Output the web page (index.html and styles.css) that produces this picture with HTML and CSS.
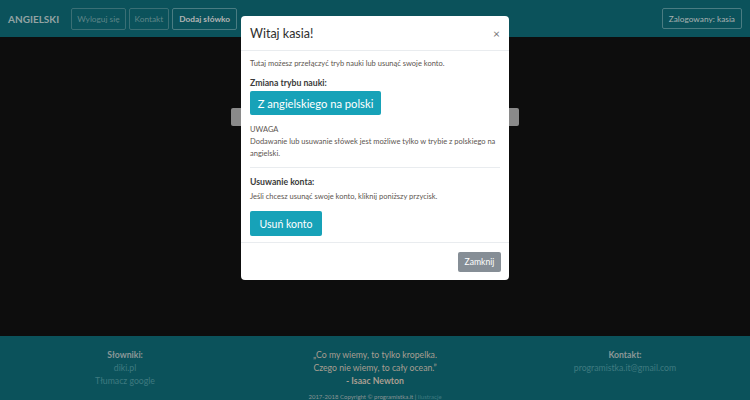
FILE: index.html
```html
<!DOCTYPE html>
<html lang="pl">
<head>
<meta charset="utf-8">
<title>Angielski</title>
<link rel="stylesheet" href="styles.css">
</head>
<body>
<div class="page">
  <nav class="navbar">
    <div class="nav-left">
      <span class="brand">ANGIELSKI</span>
      <a class="nav-btn dim">Wyloguj się</a>
      <a class="nav-btn dim">Kontakt</a>
      <a class="nav-btn bright">Dodaj słówko</a>
    </div>
    <a class="nav-btn bright user">Zalogowany: kasia</a>
  </nav>
  <main class="main">
    <div class="behind-btn"></div>
  </main>
  <footer class="footer">
    <div class="cols">
      <div class="col">
        <div class="col-head">Słowniki:</div>
        <div class="col-link">diki.pl</div>
        <div class="col-link">Tłumacz google</div>
      </div>
      <div class="col quote">
        <div>„Co my wiemy, to tylko kropelka.</div>
        <div>Czego nie wiemy, to cały ocean.”</div>
        <div class="author">- Isaac Newton</div>
      </div>
      <div class="col">
        <div class="col-head">Kontakt:</div>
        <div class="col-link">programistka.it@gmail.com</div>
      </div>
    </div>
    <div class="copy">2017-2018 Copyright © programistka.it | <span class="col-link">Ilustracje</span></div>
  </footer>
</div>

<div class="modal">
  <div class="modal-header">
    <span class="modal-title">Witaj kasia!</span>
    <span class="close">×</span>
  </div>
  <div class="modal-body">
    <p class="txt">Tutaj możesz przełączyć tryb nauki lub usunąć swoje konto.</p>
    <p class="sub">Zmiana trybu nauki:</p>
    <button class="btn-info big">Z angielskiego na polski</button>
    <p class="txt warn">UWAGA<br>Dodawanie lub usuwanie słówek jest możliwe tylko w trybie z polskiego na angielski.</p>
    <hr class="rule">
    <p class="sub sub2">Usuwanie konta:</p>
    <p class="txt">Jeśli chcesz usunąć swoje konto, kliknij poniższy przycisk.</p>
    <button class="btn-info del">Usuń konto</button>
  </div>
  <div class="modal-footer">
    <button class="btn-close">Zamknij</button>
  </div>
</div>
</body>
</html>
```
FILE: styles.css
```css
html, body {
  margin: 0;
  padding: 0;
  height: 400px;
  overflow: hidden;
  font-family: Lato, "Open Sans", sans-serif;
  background: #0d0d0d;
}
.page {
  display: flex;
  flex-direction: column;
  height: 400px;
}
.navbar {
  height: 37px;
  flex: none;
  background: #0b525b;
  display: flex;
  align-items: center;
  justify-content: space-between;
  padding: 0 8px;
  box-sizing: border-box;
}
.nav-left {
  display: flex;
  align-items: center;
  gap: 3px;
}
.brand {
  color: #93a3a3;
  font-size: 10px;
  font-weight: 700;
  margin-right: 9px;
}
.nav-btn {
  height: 22px;
  display: flex;
  align-items: center;
  padding: 0 5px;
  border: 1px solid #3a6f75;
  border-radius: 2px;
  font-size: 8.3px;
  box-sizing: border-box;
}
.nav-btn.dim {
  color: #5f8588;
}
.nav-btn.bright {
  color: #b4b4b4;
  font-weight: 700;
  border-color: #4a7c82;
  padding: 0 6px;
}
.nav-btn.user {
  font-weight: 400;
  color: #a9b1b1;
  height: 21px;
}
.main {
  flex: none;
  height: 299px;
  background: #0d0d0d;
  position: relative;
}
.behind-btn {
  position: absolute;
  left: 231px;
  top: 71px;
  width: 288px;
  height: 18px;
  background: #8a8a8a;
  border-radius: 2px;
}
.footer {
  flex: 1;
  background: #0b525b;
  padding-top: 12px;
  text-align: center;
}
.cols {
  display: grid;
  grid-template-columns: 1fr 1fr 1fr;
}
.col {
  font-size: 8.7px;
  line-height: 13px;
}
.col-head {
  color: #8c9898;
  font-weight: 700;
}
.col-link {
  color: #3f7a80;
}
.quote {
  color: #a99e92;
}
.author {
  font-weight: 700;
}
.copy {
  margin-top: 6px;
  font-size: 6px;
  color: #8a9494;
}
.modal {
  position: absolute;
  left: 241px;
  top: 16px;
  width: 268px;
  height: 264px;
  background: #fff;
  border-radius: 4px;
  font-family: Lato, "Open Sans", sans-serif;
  box-sizing: border-box;
  display: flex;
  flex-direction: column;
}
.modal-header {
  height: 34px;
  display: flex;
  align-items: center;
  justify-content: space-between;
  padding: 0 9px;
  border-bottom: 1px solid #e9ecef;
  flex: none;
}
.modal-title {
  font-size: 12.5px;
  color: #2e2e2e;
}
.close {
  color: #777;
  font-size: 12px;
}
.modal-body {
  padding: 7px 9px 0;
  flex: 1;
  border-bottom: 1px solid #e9ecef;
}
.txt {
  margin: 0;
  font-size: 7.5px;
  line-height: 12px;
  color: #5c5550;
}
.sub {
  margin: 6px 0 2px;
  font-size: 8.7px;
  line-height: 13px;
  font-weight: 700;
  color: #3a3a3a;
}
.sub2 {
  margin: 7px 0 3px;
}
.btn-info {
  display: block;
  background: #17a2b8;
  color: #fff;
  border: none;
  border-radius: 2px;
  font-family: inherit;
  padding: 0 8px;
  white-space: nowrap;
}
.btn-info.big {
  height: 24px;
  font-size: 11.2px;
  width: 131px;
  padding: 0;
  margin-bottom: 9px;
  margin-top: 1px;
}
.warn {
  line-height: 12px;
}
.rule {
  border: none;
  border-top: 1px solid #e9ecef;
  margin: 7px 0 6px;
}
.btn-info.del {
  height: 25px;
  font-size: 10.5px;
  width: 72px;
  padding: 0;
  margin-top: 8px;
}
.modal-footer {
  height: 37px;
  flex: none;
  display: flex;
  align-items: center;
  justify-content: flex-end;
  padding: 0 8px;
}
.btn-close {
  background: #868e96;
  color: #fff;
  border: none;
  border-radius: 2px;
  font-family: inherit;
  font-size: 8.6px;
  height: 20px;
  width: 43px;
  padding: 0;
}
```
